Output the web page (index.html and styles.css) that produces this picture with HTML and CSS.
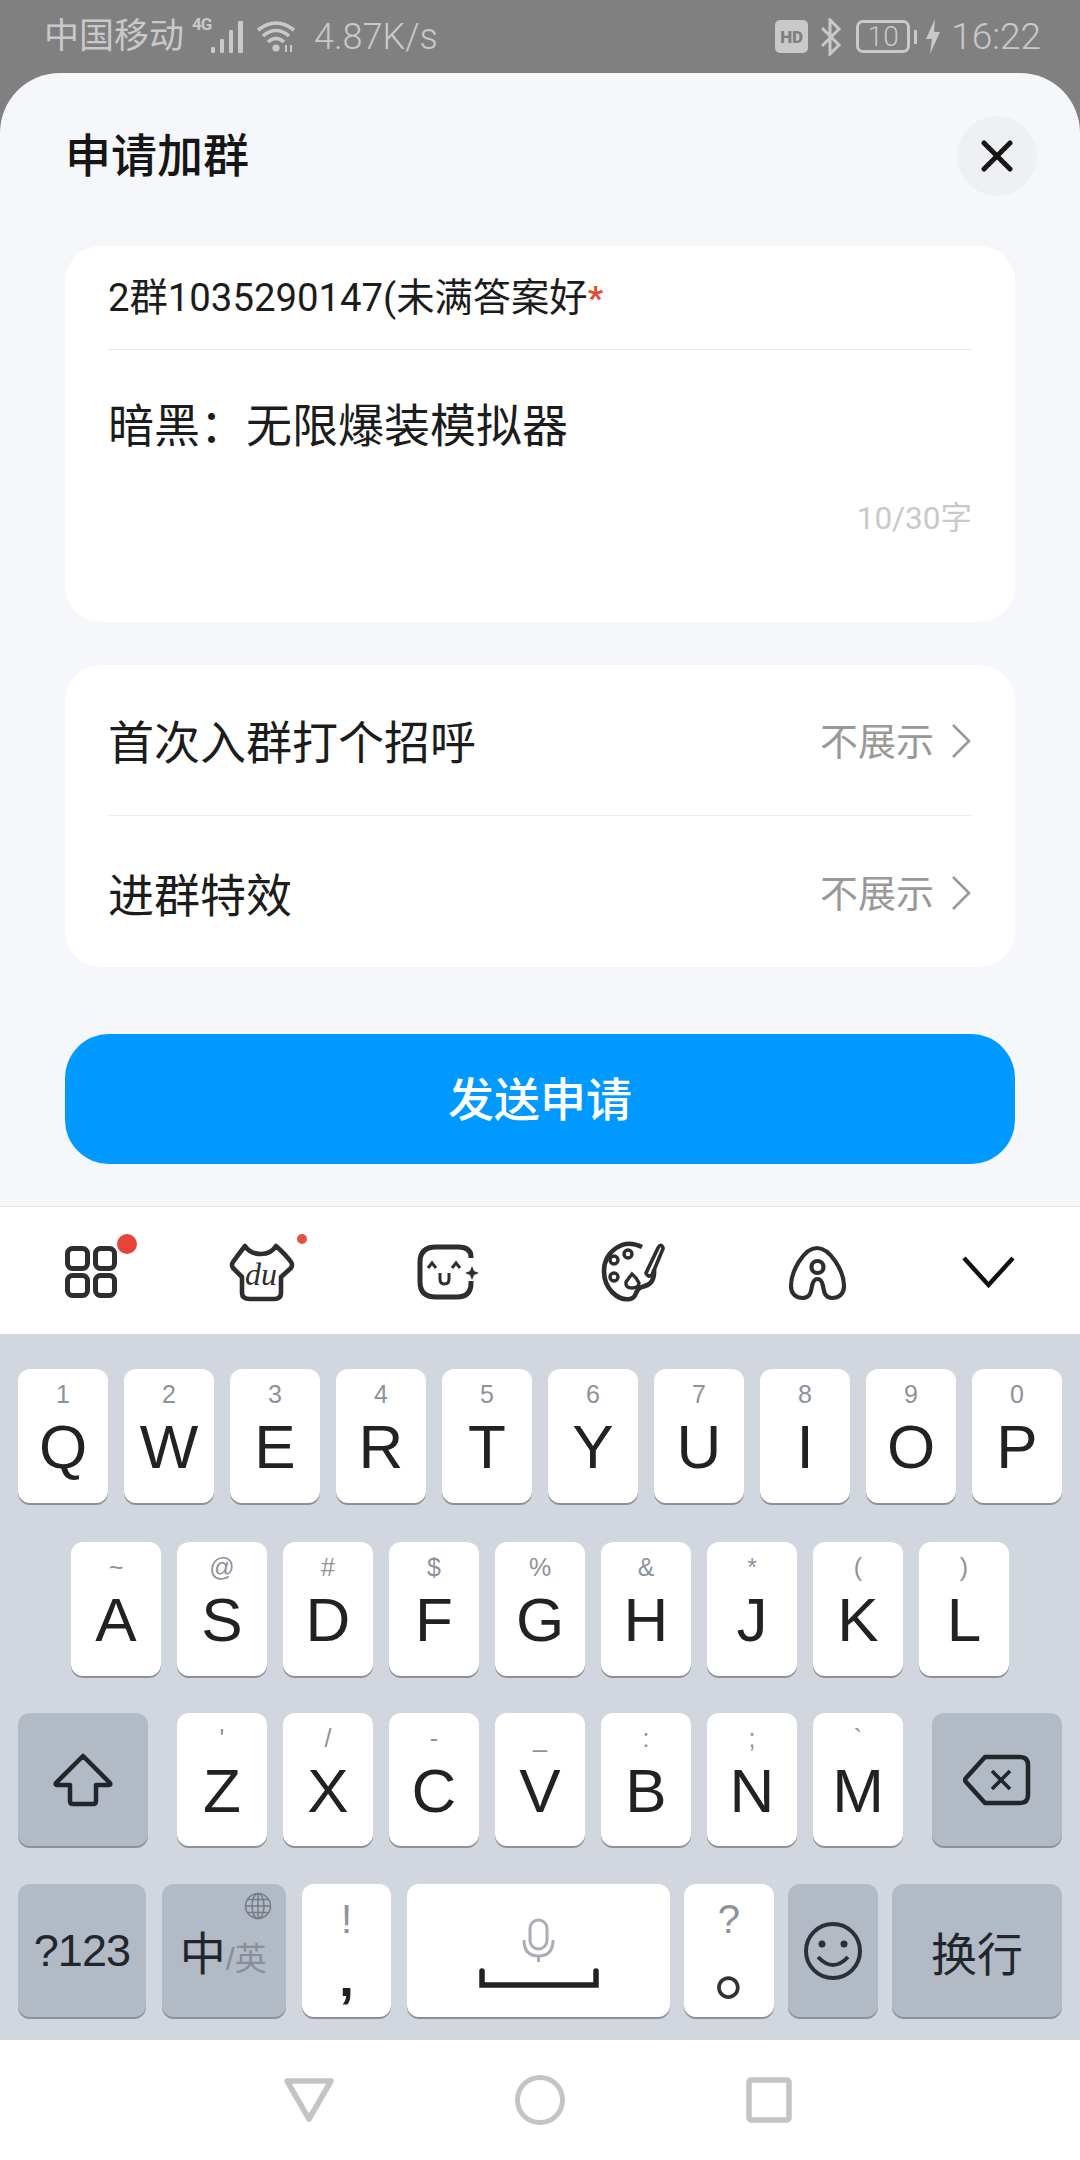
FILE: index.html
```html
<!DOCTYPE html>
<html lang="zh">
<head>
<meta charset="utf-8">
<title>申请加群</title>
<link rel="stylesheet" href="styles.css">
</head>
<body>
<div class="screen">
  <header class="status">
    <div class="status-left">
      <span class="carrier">中国移动</span>
      <span class="net">4G</span>
      <svg class="sig" width="36" height="34" viewBox="0 0 36 34"><g fill="#c9c9c9"><rect x="1" y="27" width="4" height="6" rx="1"/><rect x="10" y="19" width="4" height="14" rx="1"/><rect x="19" y="10" width="4" height="23" rx="1"/><rect x="28" y="1" width="5" height="32" rx="1"/></g></svg>
      <svg class="wifi" width="40" height="34" viewBox="0 0 40 34"><g fill="none" stroke="#c9c9c9" stroke-width="3.6"><path d="M2 10 Q20 -4 38 10"/><path d="M7 16 Q20 5 33 16"/><path d="M12 22 Q20 15 28 22"/></g><circle cx="20" cy="28" r="3.6" fill="#c9c9c9"/><path d="M30 25 v7 M35 25 v7" stroke="#c9c9c9" stroke-width="2"/></svg>
      <span class="speed">4.87K/s</span>
    </div>
    <div class="status-right">
      <span class="hd">HD</span>
      <svg class="bt" width="24" height="38" viewBox="0 0 24 38"><path d="M3 10 L20 27 L11 36 V2 L20 11 L3 28" fill="none" stroke="#c9c9c9" stroke-width="3"/></svg>
      <span class="batt">10</span>
      <span class="batt-tip"></span>
      <svg class="bolt" width="16" height="35" viewBox="0 0 16 35"><path d="M10 0 L1 20 H7 L5 35 L15 13 H9 Z" fill="#c9c9c9"/></svg>
      <span class="time">16:22</span>
    </div>
  </header>

  <main class="sheet">
    <div class="sheet-head">
      <h1 class="title">申请加群</h1>
      <button class="close" aria-label="关闭">
        <svg width="32" height="32" viewBox="0 0 32 32"><path d="M3 3 L29 29 M29 3 L3 29" stroke="#161616" stroke-width="5" stroke-linecap="round"/></svg>
      </button>
    </div>

    <section class="card card-input">
      <div class="q-row"><span class="q">2群1035290147(未满答案好</span><span class="req">*</span></div>
      <div class="answer">暗黑：无限爆装模拟器</div>
      <div class="count">10/30字</div>
    </section>

    <section class="card card-list">
      <div class="opt opt-first">
        <span class="opt-name">首次入群打个招呼</span>
        <span class="opt-val">不展示</span>
        <svg class="chev" width="22" height="36" viewBox="0 0 22 36"><path d="M3 2 L19 18 L3 34" fill="none" stroke="#999" stroke-width="2.6"/></svg>
      </div>
      <div class="opt">
        <span class="opt-name">进群特效</span>
        <span class="opt-val">不展示</span>
        <svg class="chev" width="22" height="36" viewBox="0 0 22 36"><path d="M3 2 L19 18 L3 34" fill="none" stroke="#999" stroke-width="2.6"/></svg>
      </div>
    </section>

    <button class="send">发送申请</button>
  </main>

  <nav class="toolbar">
    <svg class="tool" viewBox="0 0 100 100"><g fill="none" stroke="#2e2e2e" stroke-width="5"><rect x="27.5" y="27.5" width="20" height="20" rx="5"/><rect x="55.5" y="27.5" width="19" height="20" rx="5"/><rect x="27.5" y="54.5" width="20" height="20" rx="5"/><rect x="55.5" y="54.5" width="19" height="20" rx="5"/></g><circle cx="87" cy="23" r="10" fill="#e8433a"/></svg>
    <svg class="tool" viewBox="0 0 100 100"><path d="M25 25 Q30 33 41 33 Q51 33 56 25 Q66 34 71 41 Q73 44 71 47 L61 56 V72 Q61 78 54 78 H30 Q22 78 22 72 V56 L13 47 Q11 44 13 41 Q18 34 25 25 Z" fill="none" stroke="#2e2e2e" stroke-width="4.6" stroke-linejoin="round"/><text class="du" x="41" y="64" text-anchor="middle">du</text><circle cx="82" cy="18" r="5" fill="#e5533d"/></svg>
    <svg class="tool" viewBox="0 0 100 100"><path d="M71 37 V36 Q71 26 58 26 H36 Q20 26 20 41 V61 Q20 76 36 76 H57 Q71 76 71 62 V60" fill="none" stroke="#2e2e2e" stroke-width="5"/><path d="M28 47 L32 42 L36 47 M52 47 L56 42 L60 47" fill="none" stroke="#2e2e2e" stroke-width="3"/><path d="M40 52 V58 Q40 63 44.500 63 Q49 63 49 58 V52" fill="none" stroke="#2e2e2e" stroke-width="3"/><path d="M72 45 L74 50 L79 52 L74 54 L72 59 L70 54 L65 52 L70 50 Z" fill="#2e2e2e"/></svg>
    <svg class="tool" viewBox="0 0 100 100"><g fill="none" stroke="#2e2e2e"><path d="M62 26 C42 16 24 32 24 50 C24 68 38 80 50 78 C58 77 54 68 62 66 C70 64 75 60 74 48" stroke-width="4.600"/><path d="M66 52 L78 27 Q80 23 82 25 Q84 27 82 30 L72 54 Q68 57 66 52 Z" stroke-width="3.600"/><circle cx="34" cy="39" r="4" stroke-width="3.400"/><circle cx="48" cy="33" r="4" stroke-width="3.400"/><circle cx="34" cy="56" r="4" stroke-width="3.400"/><path d="M52 53 Q57 57 59 62 Q59 67 52 67 Q45 67 46 61 Q48 58 52 53 Z" stroke-width="3.400"/></g></svg>
    <svg class="tool" viewBox="0 0 100 100"><g fill="none" stroke="#2e2e2e" stroke-width="4.200"><path d="M57 27 C44 27 31 50 31 65 C31 73 36 77 43 77 C50 77 51 71 52 65 C53 60 55 58 57.500 58 C60 58 62 60 63 65 C64 71 65 77 72 77 C79 77 84 73 84 65 C84 50 70 27 57 27 Z"/><circle cx="57.500" cy="46" r="6"/></g></svg>
    <svg class="tool" viewBox="0 0 100 100"><path d="M24 37 L48.500 64 L73 37" fill="none" stroke="#111" stroke-width="4.400"/></svg>
  </nav>

  <section class="kb">
    <div class="row row-1">
      <div class="key"><span class="sub">1</span><span class="main">Q</span></div>
      <div class="key"><span class="sub">2</span><span class="main">W</span></div>
      <div class="key"><span class="sub">3</span><span class="main">E</span></div>
      <div class="key"><span class="sub">4</span><span class="main">R</span></div>
      <div class="key"><span class="sub">5</span><span class="main">T</span></div>
      <div class="key"><span class="sub">6</span><span class="main">Y</span></div>
      <div class="key"><span class="sub">7</span><span class="main">U</span></div>
      <div class="key"><span class="sub">8</span><span class="main">I</span></div>
      <div class="key"><span class="sub">9</span><span class="main">O</span></div>
      <div class="key"><span class="sub">0</span><span class="main">P</span></div>
    </div>
    <div class="row row-2">
      <div class="key"><span class="sub">~</span><span class="main">A</span></div>
      <div class="key"><span class="sub">@</span><span class="main">S</span></div>
      <div class="key"><span class="sub">#</span><span class="main">D</span></div>
      <div class="key"><span class="sub">$</span><span class="main">F</span></div>
      <div class="key"><span class="sub">%</span><span class="main">G</span></div>
      <div class="key"><span class="sub">&amp;</span><span class="main">H</span></div>
      <div class="key"><span class="sub">*</span><span class="main">J</span></div>
      <div class="key"><span class="sub">(</span><span class="main">K</span></div>
      <div class="key"><span class="sub">)</span><span class="main">L</span></div>
    </div>
    <div class="row row-3">
      <div class="key key-fn key-wide">
        <svg width="64" height="56" viewBox="0 0 64 56"><path d="M32 4 L59 31 Q60 33 58 33 H45 V49 Q45 52 42 52 H22 Q19 52 19 49 V33 H6 Q4 33 5 31 Z" fill="none" stroke="#22262b" stroke-width="4.500" stroke-linejoin="round"/></svg>
      </div>
      <div class="key"><span class="sub">'</span><span class="main">Z</span></div>
      <div class="key"><span class="sub">/</span><span class="main">X</span></div>
      <div class="key"><span class="sub">-</span><span class="main">C</span></div>
      <div class="key"><span class="sub">_</span><span class="main">V</span></div>
      <div class="key"><span class="sub">:</span><span class="main">B</span></div>
      <div class="key"><span class="sub">;</span><span class="main">N</span></div>
      <div class="key"><span class="sub">`</span><span class="main">M</span></div>
      <div class="key key-fn key-wide">
        <svg width="68" height="52" viewBox="0 0 68 52"><path d="M22 3 H57 Q65 3 65 11 V41 Q65 49 57 49 H22 L3 28 Q1 26 3 24 Z" fill="none" stroke="#22262b" stroke-width="4.500" stroke-linejoin="round"/><path d="M29 17 L47 35 M47 17 L29 35" stroke="#22262b" stroke-width="3.600"/></svg>
      </div>
    </div>
    <div class="row row-4">
      <div class="key key-fn key-num"><span class="fn-text">?123</span></div>
      <div class="key key-fn key-lang">
        <svg class="globe" width="28" height="28" viewBox="0 0 28 28"><g fill="none" stroke="#757c85" stroke-width="1.500"><circle cx="14" cy="14" r="12.500"/><ellipse cx="14" cy="14" rx="6" ry="12.500"/><path d="M14 1.500 V26.500 M1.500 14 H26.500 M3.500 7.500 H24.500 M3.500 20.500 H24.500"/></g></svg>
        <span class="zh">中</span><span class="en">/英</span>
      </div>
      <div class="key key-punct"><span class="p-sub">!</span><span class="p-main">,</span></div>
      <div class="key key-space">
        <svg width="124" height="72" viewBox="0 0 124 72"><g fill="none" stroke="#a9aeb6" stroke-width="3"><rect x="53" y="2" width="17" height="29" rx="8.500"/><path d="M47 22 Q47 38 61.500 38 Q76 38 76 22 M61.500 38 V44"/></g><path d="M5 53 V67 H119 V53" fill="none" stroke="#222" stroke-width="5.500" stroke-linecap="round"/></svg>
      </div>
      <div class="row-end">
        <div class="key key-punct"><span class="p-sub p-q">?</span><span class="p-ring">。</span></div>
        <div class="key key-fn key-emoji">
          <svg width="60" height="60" viewBox="0 0 60 60"><circle cx="30" cy="30" r="27" fill="none" stroke="#2c3036" stroke-width="4"/><circle cx="19" cy="23" r="3.500" fill="#2c3036"/><circle cx="41" cy="23" r="3.500" fill="#2c3036"/><path d="M15 36 Q30 52 45 36" fill="none" stroke="#2c3036" stroke-width="4"/></svg>
        </div>
        <div class="key key-fn key-enter"><span class="fn-cjk">换行</span></div>
      </div>
    </div>
  </section>

  <footer class="navbar">
    <svg width="50" height="44" viewBox="0 0 50 44"><path d="M3 3 H47 L25 41 Z" fill="none" stroke="#c4c4c4" stroke-width="5.500" stroke-linejoin="round"/></svg>
    <svg width="50" height="50" viewBox="0 0 50 50"><circle cx="25" cy="25" r="22.500" fill="none" stroke="#c4c4c4" stroke-width="5"/></svg>
    <svg width="46" height="46" viewBox="0 0 46 46"><rect x="3" y="3" width="40" height="40" rx="2" fill="none" stroke="#c4c4c4" stroke-width="5.500"/></svg>
  </footer>
</div>
</body>
</html>
```

FILE: styles.css
```css
* { box-sizing: border-box; margin: 0; padding: 0; }
html, body { width: 1080px; height: 2160px; overflow: hidden; background: #808080; }
body { font-family: Roboto, "Noto Sans CJK SC", sans-serif; }
.screen { width: 1080px; height: 2160px; display: flex; flex-direction: column; }

/* status bar */
.status { height: 73px; padding: 0 39px 0 44px; display: flex; justify-content: space-between; align-items: center; color: #c9c9c9; }
.status-left, .status-right { display: flex; align-items: center; }
.carrier { font-size: 35px; line-height: 40px; width: 148px; }
.net { font-size: 17px; font-weight: 700; width: 18px; align-self: flex-start; margin-top: -3px; letter-spacing: -1px; }
.sig { display: block; margin-right: 10px; }
.wifi { display: block; margin-right: 18px; }
.speed { font-size: 36px; font-weight: 300; line-height: 40px; }
.hd { width: 33px; height: 33px; border-radius: 5px; background: #c9c9c9; color: #808080; font-size: 17px; font-weight: 900; display: flex; align-items: center; justify-content: center; margin-right: 11px; }
.bt { display: block; margin-right: 13px; }
.batt { width: 54px; height: 33px; border: 3px solid #c9c9c9; border-radius: 7px; font-size: 28px; font-weight: 300; display: flex; align-items: center; justify-content: center; margin-right: 4px; }
.batt-tip { width: 3px; height: 14px; background: #c9c9c9; margin-right: 8px; }
.bolt { display: block; margin-right: 10px; }
.time { font-size: 37px; font-weight: 300; line-height: 40px; }

/* sheet */
.sheet { height: 1133px; background: #f5f7fb; border-radius: 60px 60px 0 0; padding: 43px 65px 0; }
.sheet-head { display: flex; justify-content: space-between; align-items: center; margin-right: -22px; height: 80px; }
.title { font-size: 46px; font-weight: 500; color: #161616; margin-top: -8px; }
.close { width: 80px; height: 80px; border: 0; border-radius: 50%; background: #eef0f4; display: flex; align-items: center; justify-content: center; }
.card { background: #fff; border-radius: 36px; }
.card-input { margin-top: 50px; height: 376px; padding: 0 43px; display: flex; flex-direction: column; }
.q-row { height: 104px; border-bottom: 1.500px solid #e8e8e8; display: flex; align-items: center; color: #1c1c1c; font-size: 38.300px; line-height: 48px; }
.req { color: #e5492f; font-weight: 700; font-size: 34px; }
.answer { margin-top: 46px; font-size: 46px; line-height: 60px; color: #1c1c1c; }
.count { margin-top: 41px; text-align: right; font-size: 31.500px; line-height: 44px; color: #c9c9c9; }
.card-list { margin-top: 43px; height: 302px; padding: 0 43px; }
.opt { height: 151px; display: flex; align-items: center; padding-top: 8px; }
.opt-first { border-bottom: 1.500px solid #ececec; padding-top: 6px; }
.opt-name { flex: 1; font-size: 46px; color: #1c1c1c; line-height: 60px; }
.opt-val { font-size: 38px; color: #999; line-height: 50px; margin-top: -3px; }
.chev { display: block; margin: -5px 0 0 16px; }
.send { display: block; width: 100%; height: 130px; margin-top: 67px; padding-bottom: 7px; border: 0; border-radius: 44px; background: #0099ff; color: #fff; font-family: inherit; font-size: 46px; font-weight: 500; }

/* toolbar */
.toolbar { height: 128px; background: #fff; border-top: 1px solid #e6e6ea; display: grid; grid-template-columns: repeat(6, 180px); justify-items: center; align-items: center; }
.tool { width: 100px; height: 100px; display: block; overflow: visible; }
.du { font-family: "Liberation Serif", serif; font-style: italic; font-size: 32px; fill: #2e2e2e; }

/* keyboard */
.kb { height: 706px; background: #d2d7df; padding: 35px 18px 0; font-family: "Liberation Sans", "Noto Sans CJK SC", sans-serif; }
.row { display: flex; gap: 16px; justify-content: center; }
.row-1 { height: 134px; margin-bottom: 39px; }
.row-2 { height: 134px; margin-bottom: 37px; }
.row-3 { height: 133px; margin-bottom: 38px; }
.row-4 { height: 133px; justify-content: flex-start; }
.row-end { display: flex; gap: 14px; margin-left: -2px; }
.key { width: 90px; background: #fff; border-radius: 12px; box-shadow: 0 2px 0 #8d9096; display: flex; flex-direction: column; align-items: center; color: #222; }
.sub { margin-top: 10px; height: 30px; font-size: 25px; line-height: 30px; color: #8e929a; font-weight: 400; }
.main { margin-top: 7px; font-size: 62px; line-height: 62px; }
.key-fn { background: #b2bac5; justify-content: center; }
.key-wide { width: 130px; }
.row-3 .key-wide:first-child { margin-right: 13px; }
.row-3 .key-wide:last-child { margin-left: 13px; }
.key-num { width: 128px; }
.fn-text { font-size: 45px; letter-spacing: -1px; color: #22262b; }
.key-lang { width: 124px; position: relative; flex-direction: row; align-items: baseline; justify-content: flex-start; padding: 42px 0 0 18px; }
.globe { position: absolute; top: 8px; right: 14px; }
.zh { font-size: 46px; line-height: 56px; color: #22262b; }
.en { font-size: 32px; color: #888e97; }
.key-punct { justify-content: flex-start; }
.p-sub { margin-top: 12px; font-size: 40px; line-height: 46px; color: #8e929a; }
.p-q { height: 46px; }
.p-main { margin-top: 8px; font-size: 54px; line-height: 54px; font-weight: 700; }
.p-ring { margin-top: 10px; margin-left: 44px; font-size: 74px; line-height: 20px; color: #333; font-family: "Noto Sans CJK SC", sans-serif; }
.key-space { width: 263px; padding-top: 34px; }
.key-emoji { width: 90px; }
.key-enter { width: 170px; }
.fn-cjk { font-size: 46px; color: #22262b; }

/* nav */
.navbar { height: 120px; background: #fff; display: flex; justify-content: center; align-items: center; gap: 181px; padding-right: 5px; }
```
